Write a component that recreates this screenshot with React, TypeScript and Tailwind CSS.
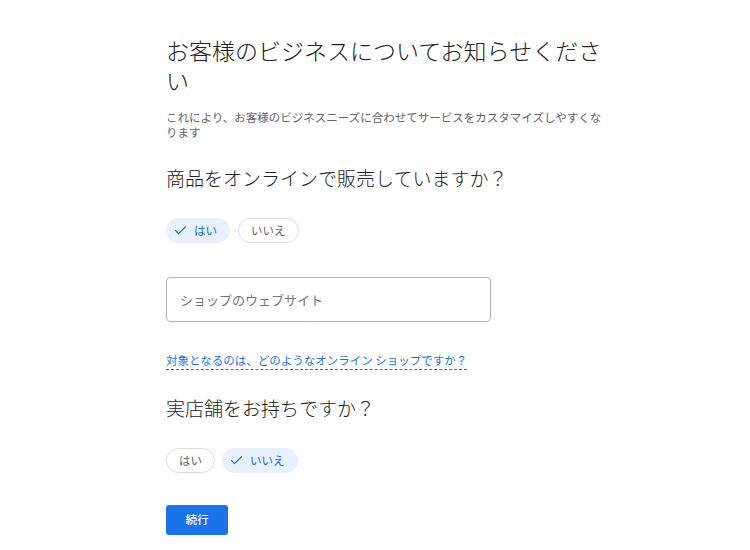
import { useState } from "react";
import { Check } from "lucide-react";

const font = { fontFamily: '"Noto Sans CJK JP", "Noto Sans", sans-serif' };

interface ChoiceProps {
  label: string;
  selected: boolean;
  onClick: () => void;
}

const Choice = ({ label, selected, onClick }: ChoiceProps) =>
  selected ? (
    <button
      onClick={onClick}
      className="flex h-[25px] items-center gap-[6px] rounded-full bg-[#e8f0fe] pl-[7px] pr-[13px] text-[11.5px] text-[#1967d2]"
    >
      <Check size={15} strokeWidth={1.7} />
      {label}
    </button>
  ) : (
    <button
      onClick={onClick}
      className="flex h-[25px] items-center rounded-full border border-[#dadce0] bg-white px-[12px] text-[11.5px] text-[#5f6368]"
    >
      {label}
    </button>
  );

const App = () => {
  const [online, setOnline] = useState(true);
  const [store, setStore] = useState(false);
  const [site, setSite] = useState("");

  return (
    <div className="min-h-[550px] w-[750px] bg-white" style={font}>
      <main className="ml-[166px] w-[444px] pt-[35px]">
        <h1 className="text-[23px] font-light leading-[30px] text-[#202124]">
          お客様のビジネスについてお知らせください
        </h1>
        <p className="mt-[15px] text-[11.5px] leading-[15px] text-[#5f6368]">
          これにより、お客様のビジネスニーズに合わせてサービスをカスタマイズしやすくなります
        </p>

        <h2 className="mt-[24px] text-[19px] font-light leading-[28px] text-[#202124]">
          商品をオンラインで販売していますか？
        </h2>
        <div className="mt-[26px] flex gap-[8px]">
          <Choice label="はい" selected={online} onClick={() => setOnline(true)} />
          <Choice label="いいえ" selected={!online} onClick={() => setOnline(false)} />
        </div>

        <input
          className="mt-[34px] block h-[45px] w-[325px] rounded-[4px] border border-[#b4b4b4] px-[13px] text-[13px] text-[#202124] placeholder:text-[#70757a] focus:outline-none"
          placeholder="ショップのウェブサイト"
          value={site}
          onChange={(e) => setSite(e.target.value)}
        />

        <div className="mt-[31px] flex">
          <a className="border-b border-dashed border-[#1a73e8] pb-[1px] text-[11.5px] leading-[15px] text-[#1a73e8]">
            対象となるのは、どのようなオンライン ショップですか？
          </a>
        </div>

        <h2 className="mt-[24px] text-[19px] font-light leading-[28px] text-[#202124]">
          実店舗をお持ちですか？
        </h2>
        <div className="mt-[26px] flex gap-[7px]">
          <Choice label="はい" selected={store} onClick={() => setStore(true)} />
          <Choice label="いいえ" selected={!store} onClick={() => setStore(false)} />
        </div>

        <button className="mt-[32px] block h-[30px] w-[62px] rounded-[3px] bg-[#1a73e8] text-[11.5px] font-medium text-white">
          続行
        </button>
      </main>
    </div>
  );
};

export default App;
